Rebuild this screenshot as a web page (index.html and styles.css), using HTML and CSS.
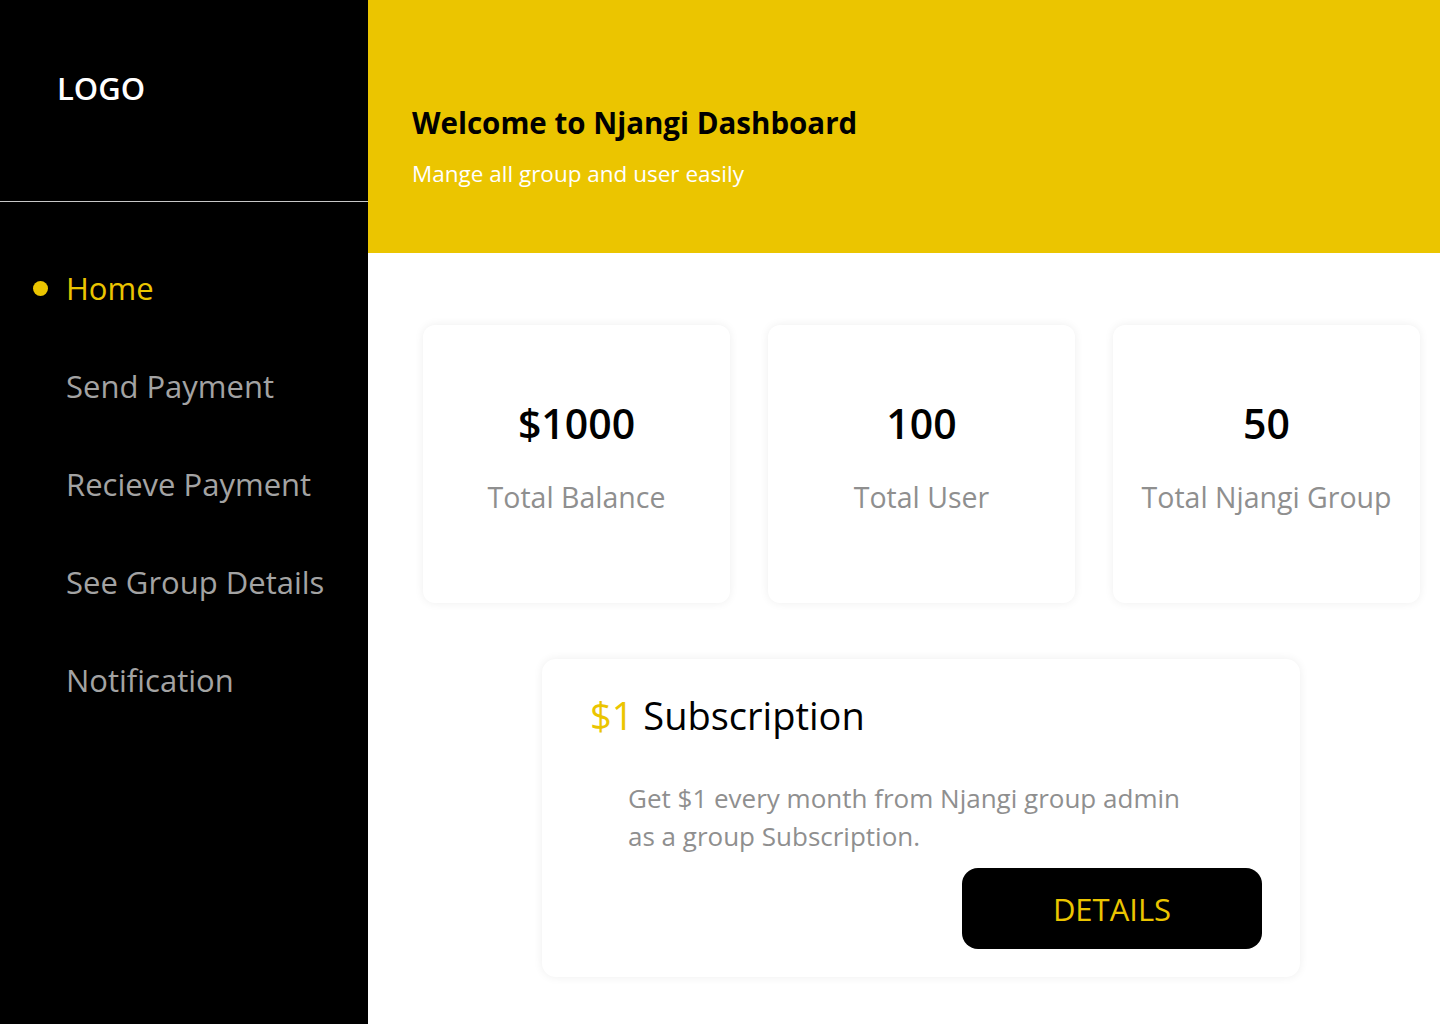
FILE: index.html
```html
<!DOCTYPE html>
<html lang="en">
<head>
    <meta charset="UTF-8">
    <meta name="viewport" content="width=device-width, initial-scale=1.0">
    <title>Njangi Dashboard</title>
    <link rel="stylesheet" href="styles.css">
</head>
<body>

    <aside class="sidebar">
        <div class="logo">LOGO</div>
        <nav class="menu">
            <a href="#" class="menu-item active">Home</a>
            <a href="#" class="menu-item">Send Payment</a>
            <a href="#" class="menu-item">Recieve Payment</a>
            <a href="#" class="menu-item">See Group Details</a>
            <a href="#" class="menu-item">Notification</a>
        </nav>
    </aside>

    <main class="content">
        <header class="banner">
            <h1>Welcome to Njangi Dashboard</h1>
            <p>Mange all group and user easily</p>
        </header>

        <section class="stats">
            <div class="card">
                <h2>$1000</h2>
                <p>Total Balance</p>
            </div>
            <div class="card">
                <h2>100</h2>
                <p>Total User</p>
            </div>
            <div class="card">
                <h2>50</h2>
                <p>Total Njangi Group</p>
            </div>
        </section>

        <section class="subscription">
            <h3><span class="price">$1</span> Subscription</h3>
            <p>Get $1 every month from Njangi group admin<br>as a group Subscription.</p>
            <div class="actions">
                <button class="btn-details">DETAILS</button>
            </div>
        </section>
    </main>

</body>
</html>
```

FILE: styles.css
```css
body {
    font-family: 'Open Sans', 'Noto Sans', sans-serif;
    margin: 0;
    padding: 0;
    display: flex;
    min-height: 1024px;
    background-color: white;
}

/* sidebar */

.sidebar {
    width: 368px;
    flex-shrink: 0;
    background-color: black;
}

.logo {
    height: 202px;
    box-sizing: border-box;
    padding: 67px 0 0 57px;
    color: white;
    font-size: 31px;
    font-weight: 600;
    border-bottom: 1px solid #c8c8c8;
}

.menu {
    display: flex;
    flex-direction: column;
    padding-top: 37px;
}

.menu-item {
    display: flex;
    align-items: center;
    height: 98px;
    padding-left: 66px;
    font-size: 31px;
    color: #a3a3a3;
    text-decoration: none;
    position: relative;
}

.menu-item.active {
    color: #ebc500;
}

.menu-item.active::before {
    content: "";
    position: absolute;
    left: 33px;
    width: 15px;
    height: 15px;
    border-radius: 50%;
    background-color: #ebc500;
}

/* main area */

.content {
    flex: 1;
    display: flex;
    flex-direction: column;
}

.banner {
    height: 253px;
    box-sizing: border-box;
    padding: 102px 0 0 44px;
    background-color: #ebc500;
}

.banner h1 {
    margin: 0;
    font-size: 29.5px;
    font-weight: 700;
    color: black;
}

.banner p {
    margin: 15px 0 0 0;
    font-size: 22.5px;
    color: white;
}

.stats {
    display: flex;
    gap: 38px;
    padding: 72px 0 0 55px;
}

.card {
    width: 307px;
    height: 278px;
    box-sizing: border-box;
    padding-top: 70px;
    border-radius: 12px;
    background-color: white;
    box-shadow: 0 0 10px rgba(0, 0, 0, 0.07);
    text-align: center;
}

.card h2 {
    margin: 0;
    font-size: 41px;
    font-weight: 600;
    color: black;
}

.card p {
    margin: 27px 0 0 0;
    font-size: 28.5px;
    color: #8f8f8f;
}

.subscription {
    width: 758px;
    height: 318px;
    box-sizing: border-box;
    margin: 56px 0 0 174px;
    padding: 30px 38px 0 48px;
    border-radius: 14px;
    background-color: white;
    box-shadow: 0 0 10px rgba(0, 0, 0, 0.07);
}

.subscription h3 {
    margin: 0;
    font-size: 38px;
    font-weight: 500;
    color: black;
}

.price {
    color: #ebc500;
    font-weight: 400;
}

.subscription p {
    margin: 38px 0 0 38px;
    font-size: 26px;
    line-height: 38px;
    color: #8f8f8f;
}

.actions {
    display: flex;
    justify-content: flex-end;
    margin-top: 13px;
}

.btn-details {
    width: 300px;
    height: 81px;
    border: none;
    border-radius: 16px;
    background-color: black;
    color: #ebc500;
    font-family: 'Open Sans', 'Noto Sans', sans-serif;
    font-size: 31px;
}
```
